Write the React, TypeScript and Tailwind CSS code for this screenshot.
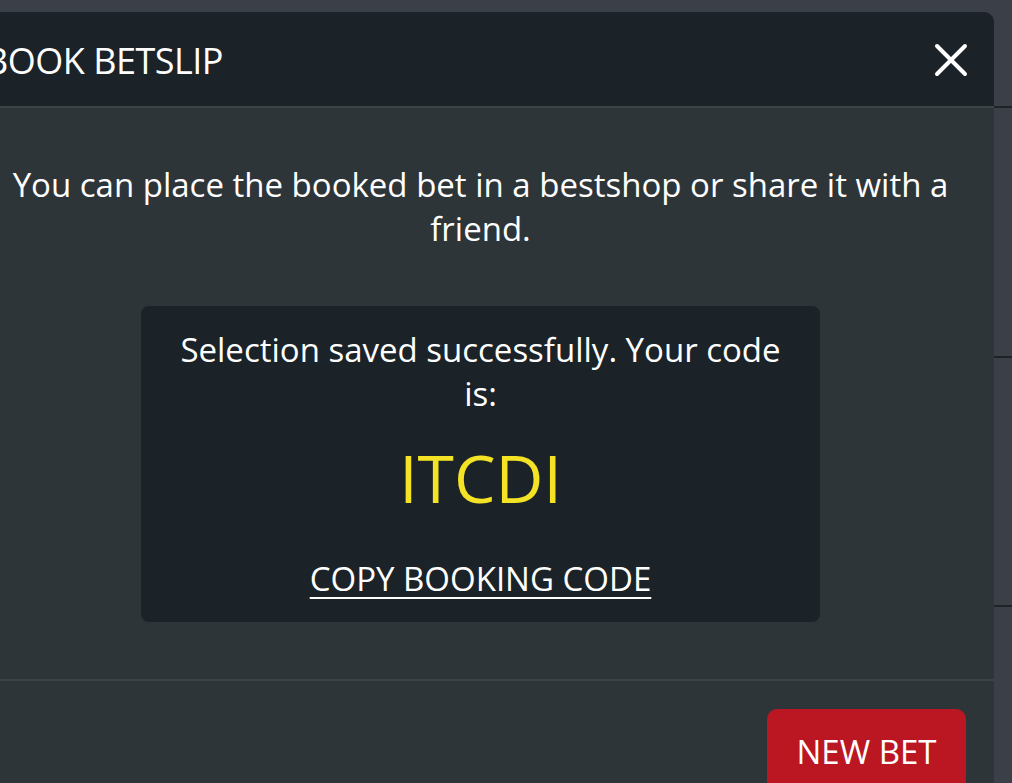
import React from "react";

const font = { fontFamily: '"Open Sans", "Noto Sans", sans-serif' };

function CloseIcon() {
  return (
    <svg width="34" height="34" viewBox="0 0 34 34" fill="none">
      <path d="M3 3 L31 31 M31 3 L3 31" stroke="#ffffff" strokeWidth="4" strokeLinecap="round" />
    </svg>
  );
}

export default function App() {
  return (
    <div className="w-[1012px] h-[783px] overflow-hidden bg-[#3b3f47] pt-3 flex" style={font}>
      <div className="ml-[-33px] w-[1027px] shrink-0 flex flex-col rounded-t-[10px] bg-[#2e3539] h-[800px]">
        <div className="h-[96px] shrink-0 flex items-center justify-between bg-[#1b2329] rounded-t-[10px] border-b-2 border-[#3d4448] pl-[18px] pr-[26px]">
          <h2 className="text-[36px] text-white tracking-[-0.5px] leading-none mt-[3px]">BOOK BETSLIP</h2>
          <button className="w-[34px] h-[34px] flex items-center justify-center mt-[2px]">
            <CloseIcon />
          </button>
        </div>
        <div className="flex flex-col items-center pt-[55px] pb-[57px] border-b-2 border-[#3b4246]">
          <p className="text-[33px] leading-[44px] text-white text-center w-[960px]">
            You can place the booked bet in a bestshop or share it with a friend.
          </p>
          <div className="mt-[55px] w-[679px] h-[316px] bg-[#1b2329] rounded-[8px] flex flex-col items-center pt-[22px] px-[30px]">
            <p className="text-[33px] leading-[44px] text-white text-center">
              Selection saved successfully. Your code is:
            </p>
            <div className="text-[66px] leading-[88px] text-[#f4e325] mt-[17px]">ITCDI</div>
            <a className="text-[33px] leading-[44px] text-white underline underline-offset-[6px] decoration-2 mt-[36px]">
              COPY BOOKING CODE
            </a>
          </div>
        </div>
        <div className="flex justify-end pt-[28px] pr-[28px]">
          <button className="w-[199px] h-[86px] bg-[#bb1722] rounded-[10px] text-white text-[33px] flex items-start justify-center pt-[18px]">
            NEW BET
          </button>
        </div>
      </div>
      <div className="flex-1 flex flex-col">
        <div className="h-[94px] shrink-0" />
        <div className="h-[250px] shrink-0 border-t-2 border-[#1e2327]" />
        <div className="h-[249px] shrink-0 border-t-2 border-[#1e2327]" />
        <div className="flex-1 border-t-2 border-[#1e2327]" />
      </div>
    </div>
  );
}
